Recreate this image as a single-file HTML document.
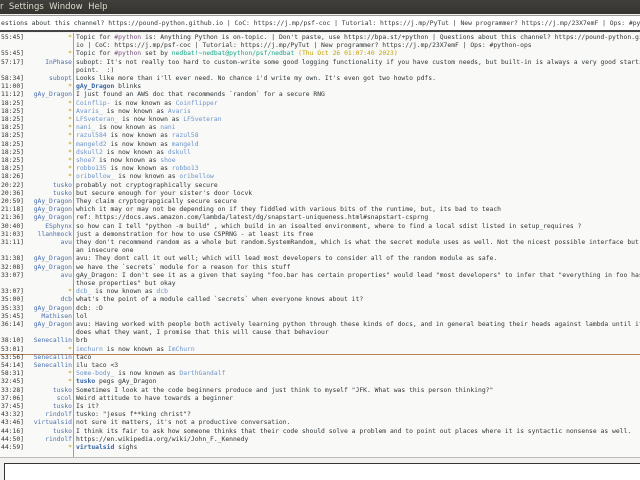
<!DOCTYPE html>
<html><head><meta charset="utf-8">
<style>
*{margin:0;padding:0;box-sizing:border-box}
html,body{width:640px;height:480px;overflow:hidden;background:#f2f1f0}
body{position:relative;font-family:"DejaVu Sans Mono","Liberation Mono",monospace;font-size:6.36px;color:#2e3436}
#menu{position:absolute;left:0;top:0;width:640px;height:14px;background:linear-gradient(#403f3b,#35342f);color:#dfdbd2;font-family:"DejaVu Sans","Liberation Sans",sans-serif;font-size:8.5px;line-height:14px;white-space:pre}
#topic{position:absolute;left:0;top:15px;width:640px;height:17px;background:#fff;border-top:1px solid #9a9a98;border-bottom:2px solid #444;white-space:pre;overflow:hidden;line-height:15px;padding-left:1px}
#chat{position:absolute;left:0;top:33px;width:640px;height:425px;background:#f9f9f7;border-bottom:1px solid #bbb;overflow:hidden}
#sep{position:absolute;left:73px;top:0;width:1px;height:425px;background:#9aa0a6}
.r{position:absolute;left:0;height:8.2px;line-height:8.2px;white-space:pre;width:640px}
.t{position:absolute;left:1px;color:#2e3436}
.n{position:absolute;right:568px;color:#4a6fae;text-align:right}
.m{position:absolute;left:76px}
.st{color:#c4a000}
.lb{color:#6d93c9}
.b{color:#3465a4;font-weight:bold}
.pu{color:#75507b}
.gr{color:#17a589}
.ye{color:#c4a000}
#mark{position:absolute;left:0;top:320.5px;width:640px;height:1px;background:#b5835a}
#input{position:absolute;left:4px;top:463px;width:640px;height:17px;background:#fff;border:1px solid #333;border-right:none;border-bottom:none}
</style></head><body>
<div id="menu">r  Settings  Window  Help</div>
<div id="topic">estions about this channel? https://pound-python.github.io | CoC: https://j.mp/psf-coc | Tutorial: https://j.mp/PyTut | New programmer? https://j.mp/23X7emF | Ops: #py</div>
<div id="chat">
<div id="sep"></div>
<div id="mark"></div>
<div class="r" style="top:0.9px"><span class="t">55:45]</span><span class="n st">*</span><span class="m">Topic for <span class="pu">#python</span> is: Anything Python is on-topic. | Don't paste, use https://bpa.st/+python | Questions about this channel? https://pound-python.github.</span></div>
<div class="r" style="top:9.1px"><span class="m">io | CoC: https://j.mp/psf-coc | Tutorial: https://j.mp/PyTut | New programmer? https://j.mp/23X7emF | Ops: #python-ops</span></div>
<div class="r" style="top:17.3px"><span class="t">55:45]</span><span class="n st">*</span><span class="m">Topic for <span class="pu">#python</span> set by <span class="gr">nedbat!~nedbat@python/psf/nedbat</span> <span class="ye">(Thu Oct 26 01:07:40 2023)</span></span></div>
<div class="r" style="top:25.5px"><span class="t">57:17]</span><span class="n">InPhase</span><span class="m">subopt: It's not really too hard to custom-write some good logging functionality if you have custom needs, but built-in is always a very good starti</span></div>
<div class="r" style="top:33.7px"><span class="m">point.  :)</span></div>
<div class="r" style="top:41.9px"><span class="t">58:34]</span><span class="n">subopt</span><span class="m">Looks like more than i'll ever need. No chance i'd write my own. It's even got two howto pdfs.</span></div>
<div class="r" style="top:50.1px"><span class="t">11:00]</span><span class="n st">*</span><span class="m"><span class="b">gAy_Dragon</span> blinks</span></div>
<div class="r" style="top:58.3px"><span class="t">11:12]</span><span class="n">gAy_Dragon</span><span class="m">I just found an AWS doc that recommends `random` for a secure RNG</span></div>
<div class="r" style="top:66.5px"><span class="t">18:25]</span><span class="n st">*</span><span class="m lb">Coinflip- <span style="color:#2e3436">is now known as</span> Coinflipper</span></div>
<div class="r" style="top:74.7px"><span class="t">18:25]</span><span class="n st">*</span><span class="m lb">Avaris_ <span style="color:#2e3436">is now known as</span> Avaris</span></div>
<div class="r" style="top:82.9px"><span class="t">18:25]</span><span class="n st">*</span><span class="m lb">LFSveteran_ <span style="color:#2e3436">is now known as</span> LFSveteran</span></div>
<div class="r" style="top:91.1px"><span class="t">18:25]</span><span class="n st">*</span><span class="m lb">nani_ <span style="color:#2e3436">is now known as</span> nani</span></div>
<div class="r" style="top:99.3px"><span class="t">18:25]</span><span class="n st">*</span><span class="m lb">razul584 <span style="color:#2e3436">is now known as</span> razul58</span></div>
<div class="r" style="top:107.5px"><span class="t">18:25]</span><span class="n st">*</span><span class="m lb">mangeld2 <span style="color:#2e3436">is now known as</span> mangeld</span></div>
<div class="r" style="top:115.7px"><span class="t">18:25]</span><span class="n st">*</span><span class="m lb">dskull2 <span style="color:#2e3436">is now known as</span> dskull</span></div>
<div class="r" style="top:123.9px"><span class="t">18:25]</span><span class="n st">*</span><span class="m lb">shoe7 <span style="color:#2e3436">is now known as</span> shoe</span></div>
<div class="r" style="top:132.1px"><span class="t">18:25]</span><span class="n st">*</span><span class="m lb">robbo135 <span style="color:#2e3436">is now known as</span> robbo13</span></div>
<div class="r" style="top:140.3px"><span class="t">18:26]</span><span class="n st">*</span><span class="m lb">oribellow_ <span style="color:#2e3436">is now known as</span> oribellow</span></div>
<div class="r" style="top:148.5px"><span class="t">20:22]</span><span class="n">tusko</span><span class="m">probably not cryptographically secure</span></div>
<div class="r" style="top:156.7px"><span class="t">20:36]</span><span class="n">tusko</span><span class="m">but secure enough for your sister's door locvk</span></div>
<div class="r" style="top:164.9px"><span class="t">20:59]</span><span class="n">gAy_Dragon</span><span class="m">They claim cryptograpgically secure secure</span></div>
<div class="r" style="top:173.1px"><span class="t">21:18]</span><span class="n">gAy_Dragon</span><span class="m">which it may or may not be depending on if they fiddled with various bits of the runtime, but, its bad to teach</span></div>
<div class="r" style="top:181.3px"><span class="t">21:36]</span><span class="n">gAy_Dragon</span><span class="m">ref: https://docs.aws.amazon.com/lambda/latest/dg/snapstart-uniqueness.html#snapstart-csprng</span></div>
<div class="r" style="top:189.5px"><span class="t">30:40]</span><span class="n">ESphynx</span><span class="m">so how can I tell "python -m build" , which build in an isoalted environment, where to find a local sdist listed in setup_requires ?</span></div>
<div class="r" style="top:197.7px"><span class="t">31:03]</span><span class="n">llanhmock</span><span class="m">just a demonstration for how to use CSPRNG - at least its free</span></div>
<div class="r" style="top:205.9px"><span class="t">31:11]</span><span class="n">avu</span><span class="m">they don't recommend random as a whole but random.SystemRandom, which is what the secret module uses as well. Not the nicest possible interface but</span></div>
<div class="r" style="top:214.1px"><span class="m">an insecure one</span></div>
<div class="r" style="top:222.3px"><span class="t">31:38]</span><span class="n">gAy_Dragon</span><span class="m">avu: They dont call it out well; which will lead most developers to consider all of the random module as safe.</span></div>
<div class="r" style="top:230.5px"><span class="t">32:08]</span><span class="n">gAy_Dragon</span><span class="m">we have the `secrets` module for a reason for this stuff</span></div>
<div class="r" style="top:238.7px"><span class="t">33:07]</span><span class="n">avu</span><span class="m">gAy_Dragon: I don't see it as a given that saying "foo.bar has certain properties" would lead "most developers" to infer that "everything in foo has</span></div>
<div class="r" style="top:246.9px"><span class="m">those properties" but okay</span></div>
<div class="r" style="top:255.1px"><span class="t">33:07]</span><span class="n st">*</span><span class="m lb">dcb_ <span style="color:#2e3436">is now known as</span> dcb</span></div>
<div class="r" style="top:263.3px"><span class="t">35:00]</span><span class="n">dcb</span><span class="m">what's the point of a module called `secrets` when everyone knows about it?</span></div>
<div class="r" style="top:271.5px"><span class="t">35:33]</span><span class="n">gAy_Dragon</span><span class="m">dcb: :D</span></div>
<div class="r" style="top:279.7px"><span class="t">35:45]</span><span class="n">Mathisen</span><span class="m">lol</span></div>
<div class="r" style="top:287.9px"><span class="t">36:14]</span><span class="n">gAy_Dragon</span><span class="m">avu: Having worked with people both actively learning python through these kinds of docs, and in general beating their heads against lambda until it</span></div>
<div class="r" style="top:296.1px"><span class="m">does what they want, I promise that this will cause that behaviour</span></div>
<div class="r" style="top:304.3px"><span class="t">38:10]</span><span class="n">Senecallin</span><span class="m">brb</span></div>
<div class="r" style="top:312.5px"><span class="t">53:01]</span><span class="n st">*</span><span class="m lb">imchurn <span style="color:#2e3436">is now known as</span> ImChurn</span></div>
<div class="r" style="top:320.7px"><span class="t">53:56]</span><span class="n">Senecallin</span><span class="m">taco</span></div>
<div class="r" style="top:328.9px"><span class="t">54:14]</span><span class="n">Senecallin</span><span class="m">ilu taco &lt;3</span></div>
<div class="r" style="top:337.1px"><span class="t">58:31]</span><span class="n st">*</span><span class="m lb">Some-body_ <span style="color:#2e3436">is now known as</span> DarthGandalf</span></div>
<div class="r" style="top:345.3px"><span class="t">32:45]</span><span class="n st">*</span><span class="m"><span class="b">tusko</span> pegs gAy_Dragon</span></div>
<div class="r" style="top:353.5px"><span class="t">33:28]</span><span class="n">tusko</span><span class="m">Sometimes I look at the code beginners produce and just think to myself "JFK. What was this person thinking?"</span></div>
<div class="r" style="top:361.7px"><span class="t">37:06]</span><span class="n">scol</span><span class="m">Weird attitude to have towards a beginner</span></div>
<div class="r" style="top:369.9px"><span class="t">37:45]</span><span class="n">tusko</span><span class="m">Is it?</span></div>
<div class="r" style="top:378.1px"><span class="t">43:32]</span><span class="n">rindolf</span><span class="m">tusko: "jesus f**king christ"?</span></div>
<div class="r" style="top:386.3px"><span class="t">43:46]</span><span class="n">virtualsid</span><span class="m">not sure it matters, it's not a productive conversation.</span></div>
<div class="r" style="top:394.5px"><span class="t">44:16]</span><span class="n">tusko</span><span class="m">I think its fair to ask how someone thinks that their code should solve a problem and to point out places where it is syntactic nonsense as well.</span></div>
<div class="r" style="top:402.7px"><span class="t">44:50]</span><span class="n">rindolf</span><span class="m">https://en.wikipedia.org/wiki/John_F._Kennedy</span></div>
<div class="r" style="top:410.9px"><span class="t">44:59]</span><span class="n st">*</span><span class="m"><span class="b">virtualsid</span> sighs</span></div>
</div>
<div id="input"></div>
</body></html>
